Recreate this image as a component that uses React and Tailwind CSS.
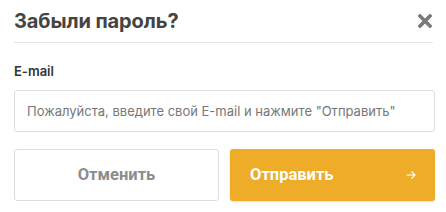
import React from "react";

export default function App() {
	return (
		<div className="w-[446px] h-[212px] bg-white px-[14px] font-['Roboto',sans-serif]">
			{/* Header */}
			<div className="flex items-center justify-between h-[43px] border-b border-[#e6e6e6] -mr-[1px] pr-[1px]">
				<h2 className="text-[20px] font-bold text-[#444] leading-none pb-[1px] font-['Inter',sans-serif] tracking-[-0.1px]">Забыли пароль?</h2>
				<svg width="14" height="14" viewBox="0 0 14 14" className="mb-[1px]">
					<path d="M2 2 L12 12 M12 2 L2 12" stroke="#7a7a7a" strokeWidth="3.6" strokeLinecap="square" />
				</svg>
			</div>

			{/* Body */}
			<div className="pt-[22px]">
				<label className="block text-[13px] font-semibold text-[#333] leading-none font-['Inter',sans-serif]">E-mail</label>
				<input
					type="text"
					placeholder='Пожалуйста, введите свой E-mail и нажмите "Отправить"'
					className="mt-[12px] w-[421px] h-[42px] border border-[#dedede] rounded-[3px] px-[12px] text-[13px] font-['Inter',sans-serif] placeholder:text-[#777] outline-none"
				/>
			</div>

			{/* Actions */}
			<div className="flex gap-[11px] mt-[17px] w-[421px]">
				<button className="w-[205px] h-[52px] border border-[#dedede] rounded-[3px] bg-white text-[16.5px] font-bold text-[#8c8c8c]">
					Отменить
				</button>
				<button className="w-[205px] h-[52px] rounded-[3px] bg-[#eeac28] text-[16.5px] font-bold text-white flex items-center justify-between pl-[20px] pr-[19px] shadow-[0_1px_2px_rgba(0,0,0,0.12)]">
					<span>Отправить</span>
					<svg width="10" height="10" viewBox="0 0 10 10" fill="none">
						<path d="M0.5 5 H9 M5.5 1.5 L9 5 L5.5 8.5" stroke="white" strokeWidth="1.2" />
					</svg>
				</button>
			</div>
		</div>
	);
}
